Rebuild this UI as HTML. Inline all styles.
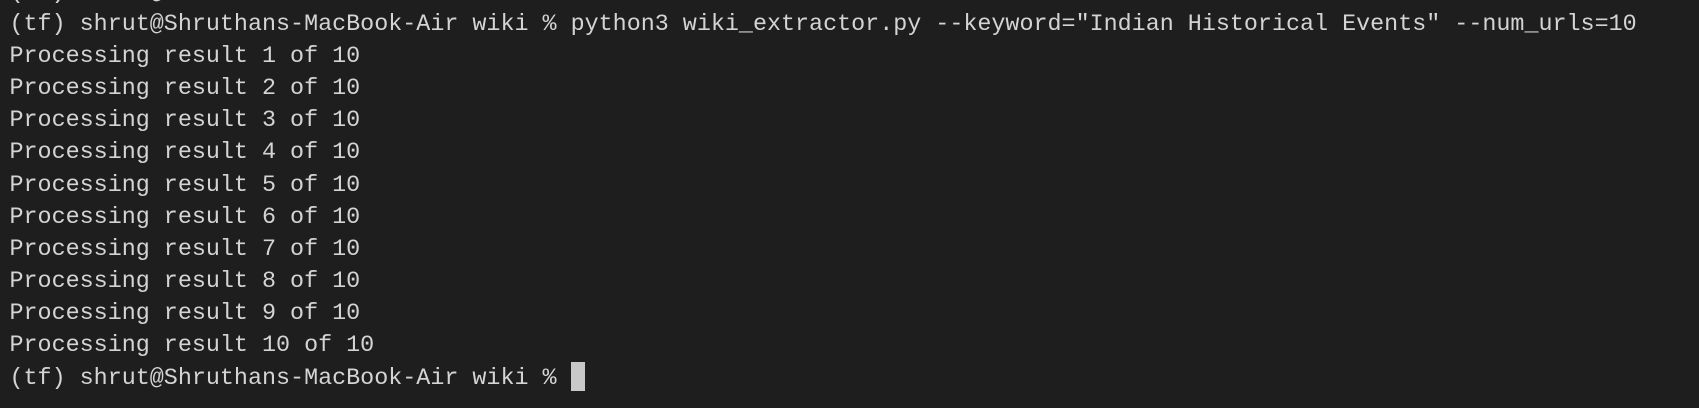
<!DOCTYPE html>
<html><head><meta charset="utf-8"><style>
html,body{margin:0;padding:0;width:1699px;height:408px;overflow:hidden;background:#1e1e1e;}
.t{position:absolute;left:9.5px;top:-23px;font-family:"Liberation Mono",monospace;font-size:23.38px;line-height:32.1px;color:#d4d4d4;white-space:pre;}
.cur{display:inline-block;width:14px;height:29px;background:#c8c8c8;vertical-align:-7px;}
</style></head><body>
<div class="t">(tf) shrut@Shruthans-MacBook-Air Virtualenvs % cd ../wiki
(tf) shrut@Shruthans-MacBook-Air wiki % python3 wiki_extractor.py --keyword="Indian Historical Events" --num_urls=10
Processing result 1 of 10
Processing result 2 of 10
Processing result 3 of 10
Processing result 4 of 10
Processing result 5 of 10
Processing result 6 of 10
Processing result 7 of 10
Processing result 8 of 10
Processing result 9 of 10
Processing result 10 of 10
(tf) shrut@Shruthans-MacBook-Air wiki % <span class="cur"></span></div>
</body></html>
